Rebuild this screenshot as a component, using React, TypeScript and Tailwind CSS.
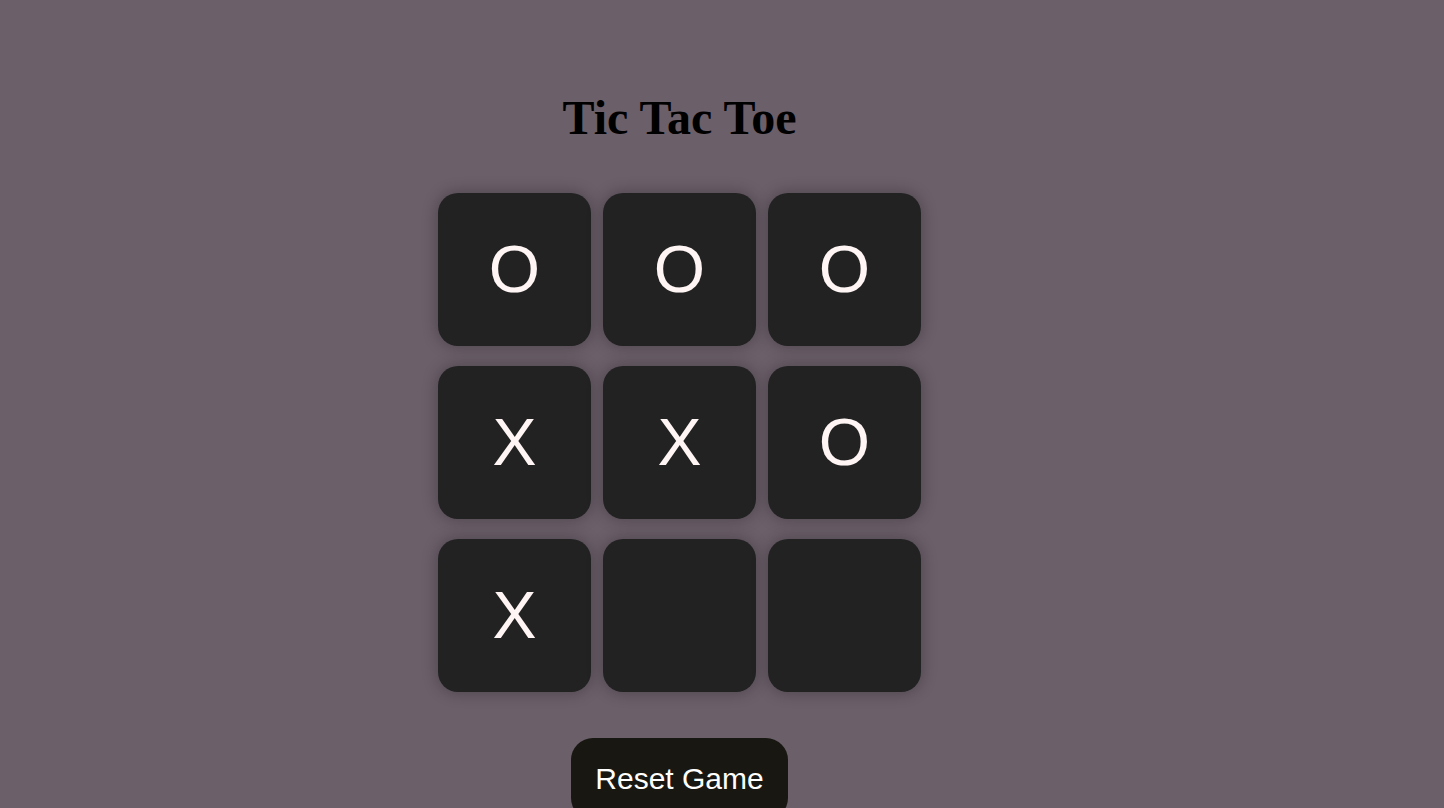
const board = ["O", "O", "O", "X", "X", "O", "X", "", ""];

export default function App() {
  return (
    <div className="min-h-[808px] w-full bg-[#6b5f69] overflow-hidden">
      <div className="flex flex-col items-center pr-[85px] pt-[91px]">
        <h1 className="font-['Liberation_Serif',serif] text-[48px] font-bold leading-[53px] text-black">
          Tic Tac Toe
        </h1>
        <div className="mt-[49px] grid grid-cols-[repeat(3,153px)] gap-x-[12px] gap-y-[20px]">
          {board.map((v, i) => (
            <div
              key={i}
              className="flex h-[153px] w-[153px] items-center justify-center rounded-[20px] bg-[#222222] font-['Liberation_Sans',sans-serif] text-[66px] text-[#fff5f5] shadow-[0_0_16px_rgba(0,0,0,0.3)]"
            >
              {v}
            </div>
          ))}
        </div>
        <button className="mt-[46px] rounded-[22px] bg-[#181712] px-[24px] py-[24px] font-['Liberation_Sans',sans-serif] text-[30px] leading-[34px] text-white">
          Reset Game
        </button>
      </div>
    </div>
  );
}
